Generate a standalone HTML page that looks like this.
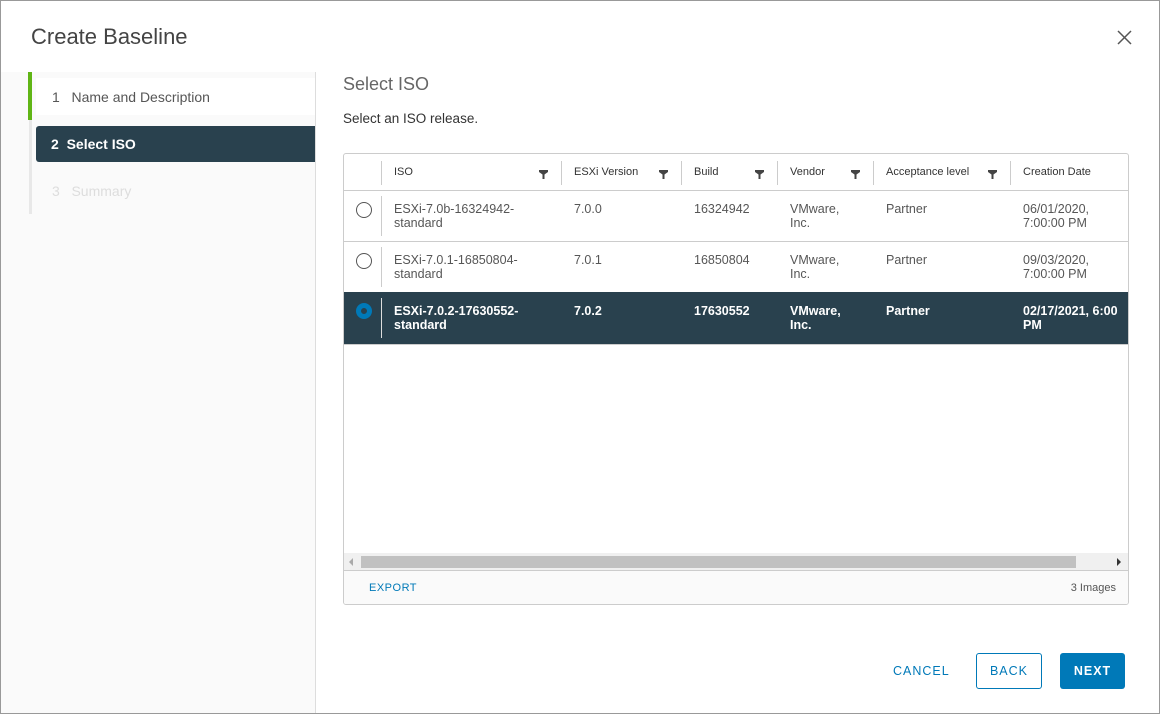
<!DOCTYPE html><html><head><style>
*{box-sizing:border-box;margin:0;padding:0}
body{width:1160px;height:714px;background:#fff;font-family:"Liberation Sans",sans-serif;position:relative;overflow:hidden;color:#565656}
.a{position:absolute}
.side{left:1px;top:72px;width:315px;height:641px;background:#fafafa;border-right:1px solid #ddd}
.hc{font-size:11px;color:#333;top:166px}
.cell{font-size:12.5px;line-height:14px}
.sep{width:1px;background:#ccc}
.f{width:9px;height:9px}
</style></head><body>
<div class="a" style="left:0;top:0;width:1160px;height:714px;border:1px solid #999"></div>
<div class="a" style="left:31px;top:24px;font-size:22px;color:#444">Create Baseline</div>
<svg class="a" style="left:1117px;top:30px" width="15" height="15"><path d="M1 1L14 14M14 1L1 14" stroke="#555" stroke-width="1.5"/></svg>
<div class="a side"></div>
<div class="a" style="left:29px;top:72px;width:3px;height:142px;background:#e8e8e8"></div>
<div class="a" style="left:28px;top:72px;width:4px;height:48px;background:#60b515"></div>
<div class="a" style="left:36px;top:78px;width:279px;height:37px;background:#fff"></div>
<div class="a" style="left:52px;top:89px;font-size:14px;color:#565656">1&nbsp;&nbsp;&nbsp;Name and Description</div>
<div class="a" style="left:36px;top:126px;width:279px;height:36px;background:#29414e;border-radius:3px 0 0 3px"></div>
<div class="a" style="left:51px;top:136px;font-size:14px;color:#fff;font-weight:bold">2&nbsp;&nbsp;Select ISO</div>
<div class="a" style="left:52px;top:183px;font-size:14px;color:#ddd">3&nbsp;&nbsp;&nbsp;Summary</div>
<div class="a" style="left:343px;top:74px;font-size:18px;color:#666">Select ISO</div>
<div class="a" style="left:343px;top:111px;font-size:13.5px;color:#333">Select an ISO release.</div>
<div class="a" style="left:343px;top:153px;width:786px;height:452px;border:1px solid #ccc;border-radius:3px;overflow:hidden">
<div class="a" style="left:0;top:36px;width:786px;height:1px;background:#ccc"></div>
<div class="a" style="left:0;top:87px;width:786px;height:1px;background:#ccc"></div>
<div class="a" style="left:0;top:138px;width:786px;height:52px;background:#29414e"></div>
<div class="a" style="left:0;top:190px;width:786px;height:1px;background:#ccc"></div>
<div class="a" style="left:0;top:399px;width:786px;height:18px;background:#f0f0f0"></div>
<div class="a" style="left:17px;top:402px;width:715px;height:12px;background:#c1c1c1"></div>
<div class="a" style="left:0;top:416px;width:786px;height:36px;background:#fafafa;border-top:1px solid #ccc"></div>
<div class="a" style="left:25px;top:428px;font-size:11px;color:#0079b8;letter-spacing:.5px">EXPORT</div>
<div class="a" style="right:12px;top:428px;font-size:11px;color:#555">3 Images</div>
<div class="a" style="left:773px;top:404px;width:0;height:0;border-top:4px solid transparent;border-bottom:4px solid transparent;border-left:4px solid #333"></div>
<div class="a" style="left:5px;top:404px;width:0;height:0;border-top:4px solid transparent;border-bottom:4px solid transparent;border-right:4px solid #aaa"></div>
</div>
<div class="a sep" style="left:381px;top:161px;height:24px"></div>
<div class="a sep" style="left:561px;top:161px;height:24px"></div>
<div class="a sep" style="left:681px;top:161px;height:24px"></div>
<div class="a sep" style="left:777px;top:161px;height:24px"></div>
<div class="a sep" style="left:873px;top:161px;height:24px"></div>
<div class="a sep" style="left:1010px;top:161px;height:24px"></div>
<div class="a hc" style="left:394px">ISO</div><svg class="a f" style="left:539px;top:170px"><path d="M0 0H9V2L5.5 4.5V9H3.5V4.5L0 2Z" fill="#444"/></svg>
<div class="a hc" style="left:574px">ESXi Version</div><svg class="a f" style="left:659px;top:170px"><path d="M0 0H9V2L5.5 4.5V9H3.5V4.5L0 2Z" fill="#444"/></svg>
<div class="a hc" style="left:694px">Build</div><svg class="a f" style="left:755px;top:170px"><path d="M0 0H9V2L5.5 4.5V9H3.5V4.5L0 2Z" fill="#444"/></svg>
<div class="a hc" style="left:790px">Vendor</div><svg class="a f" style="left:851px;top:170px"><path d="M0 0H9V2L5.5 4.5V9H3.5V4.5L0 2Z" fill="#444"/></svg>
<div class="a hc" style="left:886px">Acceptance level</div><svg class="a f" style="left:988px;top:170px"><path d="M0 0H9V2L5.5 4.5V9H3.5V4.5L0 2Z" fill="#444"/></svg>
<div class="a hc" style="left:1023px">Creation Date</div>
<div class="a sep" style="left:381px;top:196px;height:40px"></div>
<div class="a sep" style="left:381px;top:247px;height:40px"></div>
<div class="a sep" style="left:381px;top:298px;height:40px;background:#ddd"></div>
<div class="a" style="left:356px;top:202px;width:16px;height:16px;border:1.3px solid #555;border-radius:50%"></div>
<div class="a" style="left:356px;top:253px;width:16px;height:16px;border:1.3px solid #555;border-radius:50%"></div>
<div class="a" style="left:356px;top:303px;width:16px;height:16px;border:5px solid #0079b8;border-radius:50%;background:#29414e"></div>
<div class="a cell" style="left:394px;top:202px">ESXi-7.0b-16324942-<br>standard</div>
<div class="a cell" style="left:574px;top:202px">7.0.0</div>
<div class="a cell" style="left:694px;top:202px">16324942</div>
<div class="a cell" style="left:790px;top:202px">VMware,<br>Inc.</div>
<div class="a cell" style="left:886px;top:202px">Partner</div>
<div class="a cell" style="left:1023px;top:202px">06/01/2020,<br>7:00:00 PM</div>
<div class="a cell" style="left:394px;top:253px">ESXi-7.0.1-16850804-<br>standard</div>
<div class="a cell" style="left:574px;top:253px">7.0.1</div>
<div class="a cell" style="left:694px;top:253px">16850804</div>
<div class="a cell" style="left:790px;top:253px">VMware,<br>Inc.</div>
<div class="a cell" style="left:886px;top:253px">Partner</div>
<div class="a cell" style="left:1023px;top:253px">09/03/2020,<br>7:00:00 PM</div>
<div class="a" style="left:344px;top:292px;width:784px;height:51px;overflow:hidden;color:#fff;font-weight:bold">
<div class="a cell" style="left:50px;top:12px">ESXi-7.0.2-17630552-<br>standard</div>
<div class="a cell" style="left:230px;top:12px">7.0.2</div>
<div class="a cell" style="left:350px;top:12px">17630552</div>
<div class="a cell" style="left:446px;top:12px">VMware,<br>Inc.</div>
<div class="a cell" style="left:542px;top:12px">Partner</div>
<div class="a cell" style="left:679px;top:12px;white-space:nowrap">02/17/2021, 6:00<br>PM</div>
</div>
<div class="a" style="left:893px;top:664px;font-size:12.5px;color:#0079b8;letter-spacing:1px">CANCEL</div>
<div class="a" style="left:976px;top:653px;width:66px;height:36px;border:1px solid #0079b8;border-radius:3px;font-size:12.5px;color:#0079b8;letter-spacing:1px;text-align:center;line-height:34px">BACK</div>
<div class="a" style="left:1060px;top:653px;width:65px;height:36px;background:#0079b8;border-radius:3px;font-size:12.5px;color:#fff;font-weight:bold;letter-spacing:1px;text-align:center;line-height:36px">NEXT</div>
</body></html>
